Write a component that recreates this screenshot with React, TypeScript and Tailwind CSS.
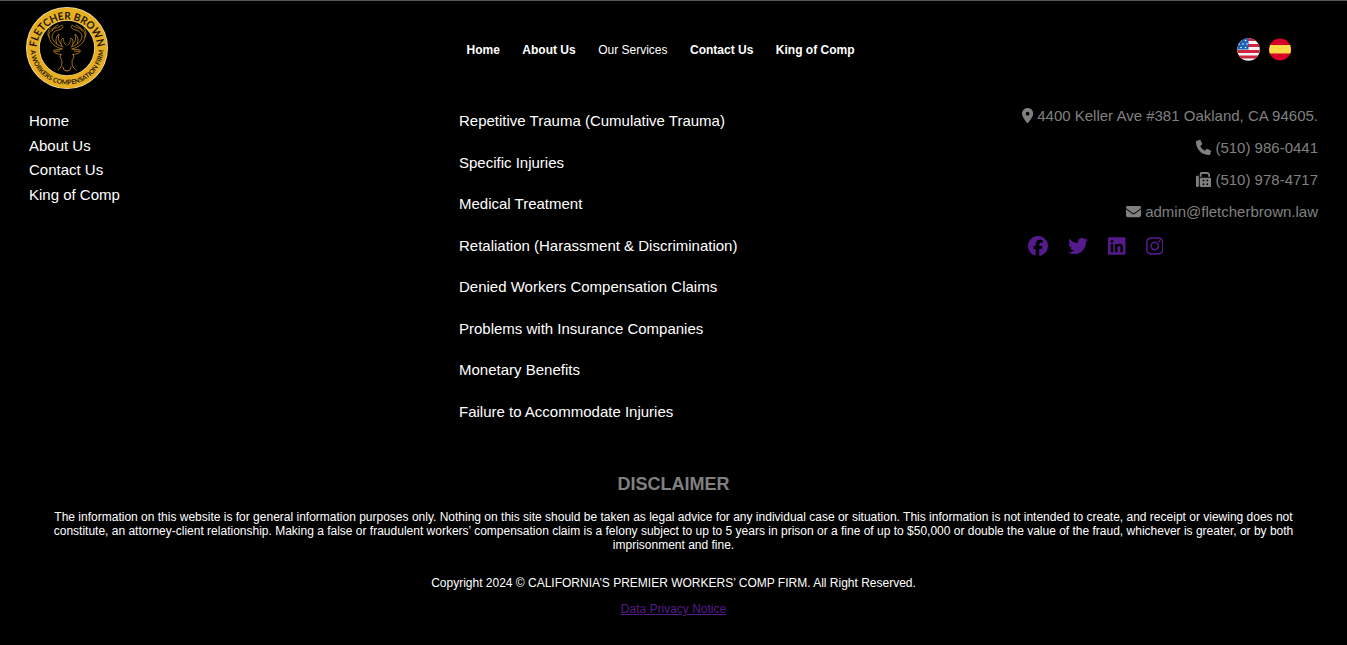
import React from 'react';
import { FaLocationDot, FaPhone, FaFax, FaEnvelope, FaFacebook, FaTwitter, FaLinkedin, FaInstagram } from 'react-icons/fa6';

const nav = ['Home', 'About Us', 'Our Services', 'Contact Us', 'King of Comp'];
const links = ['Home', 'About Us', 'Contact Us', 'King of Comp'];
const services = [
  'Repetitive Trauma (Cumulative Trauma)',
  'Specific Injuries',
  'Medical Treatment',
  'Retaliation (Harassment & Discrimination)',
  'Denied Workers Compensation Claims',
  'Problems with Insurance Companies',
  'Monetary Benefits',
  'Failure to Accommodate Injuries',
];

function Antlers() {
  return (
    <g fill="none" stroke="#c48a1c" strokeWidth="0.8" strokeLinecap="round" strokeLinejoin="round">
      <path d="M-5 1C-12-1-17-5-18-11C-19-16-15-20-11-20C-9-20-7-22-5-23M-4-1C-10-3-14-6-15-11C-15-15-12-17-9-18C-6-18-4-20-4-22M-18-11C-20-14-19-17-17-20M-15-17C-14-20-12-22-9-23M-10-4C-12-7-11-12-8-14C-9-10-9-7-6-4M-5-2C-7-5-6-9-4-10C-3-8-4-5-1-3" />
      <path d="M-5 1L-13 2C-14 4-12 6-6 6.500M-7 3L-12 3.500M-6 6L-7 9L-5 13C-5 18-6 20-9 22M-4 19L-3 22L0 23" />
    </g>
  );
}

function Logo() {
  return (
    <svg className="mb-[3px] block h-[84px] w-[84px]" viewBox="-42 -42 84 84" aria-label="Fletcher Brown">
      <defs>
        <path id="topArc" d="M-30.5 2A30.5 30.5 0 1 1 30.5 2" />
        <path id="bottomArc" d="M-36.500 0A36.500 36.500 0 0 0 36.500 0" />
      </defs>
      <circle r="41" fill="#f3e3b5" />
      <circle r="40.2" fill="#e8ae22" />
      <circle r="28" fill="#f3d88c" />
      <circle r="27.2" fill="#000" />
      <text className="font-['Lato',sans-serif] text-[10.5px] font-bold" fill="#1c1606" textAnchor="middle">
        <textPath href="#topArc" startOffset="50%" textLength="90" lengthAdjust="spacingAndGlyphs">FLETCHER BROWN</textPath>
      </text>
      <text className="font-['Lato',sans-serif] text-[6.6px] font-bold" fill="#1c1606" textAnchor="middle">
        <textPath href="#bottomArc" startOffset="50%" textLength="110" lengthAdjust="spacingAndGlyphs">A WORKERS COMPENSATION FIRM</textPath>
      </text>
      <Antlers />
      <g transform="scale(-1 1)"><Antlers /></g>
    </svg>
  );
}

function FlagUS() {
  return (
    <svg className="block h-[23px] w-[23px]" viewBox="0 0 23 23">
      <defs><clipPath id="us"><circle cx="11.5" cy="11.5" r="11.3" /></clipPath></defs>
      <g clipPath="url(#us)">
        <rect width="23" height="23" fill="#f4f2f2" />
        <path d="M0 1.5H23M0 7.5H23M0 13.5H23M0 19H23" stroke="#d02440" strokeWidth="2.8" />
        <rect width="11.5" height="11.5" fill="#1762b2" />
        <path d="M4 2.5h.1M8.5 2.5h.1M2 6h.1M6 6h.1M10 6h.1M4 9.5h.1M8.5 9.5h.1" stroke="#fff" strokeWidth="1.5" strokeLinecap="round" />
      </g>
    </svg>
  );
}

function FlagES() {
  return (
    <svg className="block h-[23px] w-[23px]" viewBox="0 0 23 23">
      <defs><clipPath id="es"><circle cx="11" cy="11.5" r="11" /></clipPath></defs>
      <g clipPath="url(#es)">
        <rect width="23" height="23" fill="#d80027" />
        <rect y="7" width="23" height="8.5" fill="#ffda44" />
      </g>
    </svg>
  );
}

export default function App() {
  return (
    <div className="flex h-[645px] w-full flex-col overflow-hidden border-t border-[#555] bg-black font-['Liberation_Sans',Arial,sans-serif] text-white">
      <header className="grid h-[97px] shrink-0 grid-cols-[1fr_auto_1fr] items-center pr-[55px] pl-[25px]">
        <Logo />
        <nav className="ml-[4px] flex gap-[22.5px] text-xs">
          {nav.map((n) => (
            <a key={n} className={n === 'Our Services' ? 'font-normal' : 'font-bold'}>{n}</a>
          ))}
        </nav>
        <div className="flex justify-end gap-[9px]">
          <FlagUS />
          <FlagES />
        </div>
      </header>

      <main className="flex h-[364px] shrink-0 justify-between px-[29px] text-[15px]">
        <ul className="w-[430px] pt-[11px]">
          {links.map((l) => <li key={l} className="h-[24.6px] leading-[24.6px]">{l}</li>)}
        </ul>
        <ul className="flex-1 pt-[2px]">
          {services.map((s) => <li key={s} className="h-[41.55px] leading-[41.55px]">{s}</li>)}
        </ul>
        <div className="w-[290px] pt-[2px] whitespace-nowrap text-[#808080]">
          <p className="flex h-8 items-center justify-end gap-1"><FaLocationDot className="mb-0.5 h-[15px] w-[11.25px] shrink-0" /><span>4400 Keller Ave #381 Oakland, CA 94605.</span></p>
          <p className="flex h-8 items-center justify-end gap-1"><FaPhone className="mb-0.5" /><span>(510) 986-0441</span></p>
          <p className="flex h-8 items-center justify-end gap-1"><FaFax className="mb-0.5" /><span>(510) 978-4717</span></p>
          <p className="flex h-8 items-center justify-end gap-1"><FaEnvelope className="mb-0.5" /><span>admin@fletcherbrown.law</span></p>
          <div className="flex gap-5 pt-[8px] text-[#551a8b]">
            <FaFacebook className="h-5 w-5" />
            <FaTwitter className="h-5 w-5" />
            <FaLinkedin className="h-5 w-[17.5px]" />
            <FaInstagram className="h-5 w-[17.5px]" />
          </div>
        </div>
      </main>

      <footer className="px-[50px] text-center text-xs">
        <h2 className="pt-[11px] text-lg leading-[22px] font-bold text-[#808080]">DISCLAIMER</h2>
        <p className="pt-[15px] leading-[14px]">
          The information on this website is for general information purposes only. Nothing on this site should be taken as legal advice for any individual case or situation. This information is not intended to create, and receipt or viewing does not constitute, an attorney-client relationship. Making a false or fraudulent workers’ compensation claim is a felony subject to up to 5 years in prison or a fine of up to $50,000 or double the value of the fraud, whichever is greater, or by both imprisonment and fine.
        </p>
        <p className="pt-[24px] leading-[14px]">Copyright 2024 © CALIFORNIA’S PREMIER WORKERS’ COMP FIRM. All Right Reserved.</p>
        <p className="pt-[12px] leading-[14px]"><a className="text-[#551a8b] underline">Data Privacy Notice</a></p>
      </footer>
    </div>
  );
}
